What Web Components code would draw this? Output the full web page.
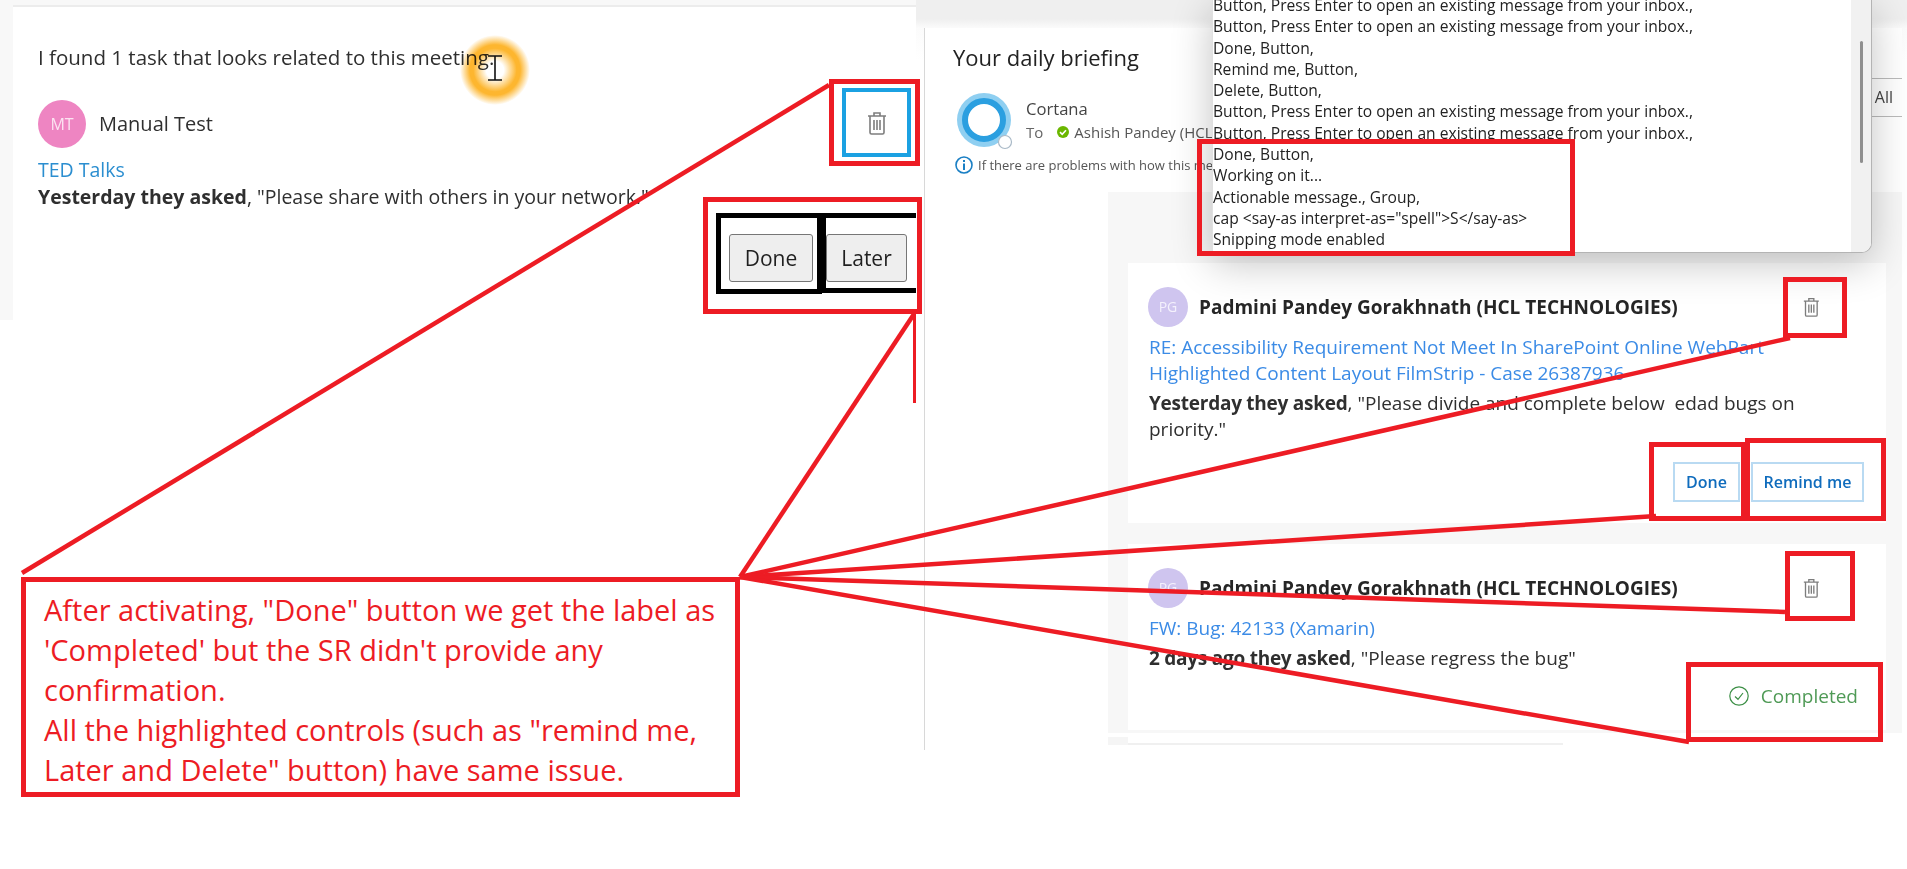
<!DOCTYPE html>
<html lang="en">
<head>
<meta charset="utf-8">
<title>Daily briefing</title>
<style>
    html, body { margin: 0; padding: 0; background: #fff; }
    body { font-family: "Open Sans", "Liberation Sans", sans-serif; color: #2b2b2b; width: 1907px; height: 869px; overflow: hidden; }
    task-card b { letter-spacing: -.25px; }
</style>
</head>
<body>
<shot-canvas>
    <meeting-panel></meeting-panel>
    <briefing-panel>
        <task-card slot="cards" style="height:260px" initials="PG" name="Padmini Pandey Gorakhnath (HCL TECHNOLOGIES)">
            <span slot="link">RE: Accessibility Requirement Not Meet In SharePoint Online WebPart<br>Highlighted Content Layout FilmStrip - Case 26387936</span>
            <span slot="text"><b>Yesterday they asked</b>, "Please divide and complete below&nbsp; edad bugs on<br>priority."</span>
            <action-button slot="actions" style="width:67px">Done</action-button>
            <action-button slot="actions" style="width:113px">Remind me</action-button>
        </task-card>
        <task-card slot="cards" style="height:186px" initials="PG" name="Padmini Pandey Gorakhnath (HCL TECHNOLOGIES)">
            <span slot="link">FW: Bug: 42133 (Xamarin)</span>
            <span slot="text"><b>2 days ago they asked</b>, "Please regress the bug"</span>
            <completed-label slot="actions">Completed</completed-label>
        </task-card>
    </briefing-panel>
    <sr-log>
        <div>Button, Press Enter to open an existing message from your inbox.,</div>
        <div>Button, Press Enter to open an existing message from your inbox.,</div>
        <div>Done, Button,</div>
        <div>Remind me, Button,</div>
        <div>Delete, Button,</div>
        <div>Button, Press Enter to open an existing message from your inbox.,</div>
        <div>Button, Press Enter to open an existing message from your inbox.,</div>
        <div>Done, Button,</div>
        <div>Working on it...</div>
        <div>Actionable message., Group,</div>
        <div>cap &lt;say-as interpret-as="spell"&gt;S&lt;/say-as&gt;</div>
        <div>Snipping mode enabled</div>
    </sr-log>
    <cursor-glow></cursor-glow>
    <markup-layer></markup-layer>
    <mark-box x="829" y="79" w="91" h="87"></mark-box>
    <mark-box x="703" y="197" w="219" h="117"></mark-box>
    <mark-box x="1197" y="139" w="378" h="117"></mark-box>
    <mark-box x="1783" y="277" w="64" h="61"></mark-box>
    <mark-box x="1649" y="442" w="97" h="79"></mark-box>
    <mark-box x="1745" y="438" w="141" h="83"></mark-box>
    <mark-box x="1785" y="551" w="70" h="70"></mark-box>
    <mark-box x="1686" y="662" w="197" h="80"></mark-box>
    <issue-note>
        After activating, "Done" button we get the label as<br>
        'Completed' but the SR didn't provide any<br>
        confirmation.<br>
        All the highlighted controls (such as "remind me,<br>
        Later and Delete" button) have same issue.
    </issue-note>
</shot-canvas>

<script>
class ShotCanvas extends HTMLElement {
    constructor() {
        super();
        this.attachShadow({mode: "open"}).innerHTML = `
            <style>
                :host { display: flex; position: relative; width: 1907px; height: 869px; overflow: hidden; }
            </style>
            <slot></slot>`;
    }
}

class TrashButton extends HTMLElement {
    constructor() {
        super();
        const h = this.getAttribute("size") || 24;
        this.attachShadow({mode: "open"}).innerHTML = `
            <style>
                :host { display: inline-flex; align-items: center; justify-content: center; }
            </style>
            <svg height="${h}" width="${h * 20 / 24}" viewBox="0 0 20 24" fill="none" stroke="#7d7d7d" stroke-width="1.6">
                <path d="M1 5h18M7 5V2h6v3M3 5v16.5c0 .8.6 1.5 1.5 1.5h11c.9 0 1.5-.7 1.5-1.5V5M7 9v10M10 9v10M13 9v10"/>
            </svg>`;
    }
}

class MeetingPanel extends HTMLElement {
    constructor() {
        super();
        this.attachShadow({mode: "open"}).innerHTML = `
            <style>
                * { box-sizing: border-box; }
                :host { display: block; box-sizing: border-box; width: 916px; height: 320px; flex: none; background: #f8f8f8; padding: 5px 0 0 13px; font-size: 20px; line-height: 28px; color: #2f2f2f; }
                .inner { height: 100%; background: #fff; border-top: 2px solid #ececec; display: flex; flex-direction: column; padding: 36px 0 0 25px; }
                .title { font-size: 20.5px; }
                .head { display: flex; align-items: center; justify-content: space-between; height: 69px; margin-top: 17px; padding-right: 5px; }
                .who { display: flex; align-items: center; gap: 13px; margin-top: 3px; }
                .avatar { width: 48px; height: 48px; border-radius: 50%; background: #ee85c2; color: #fbe3f1; font-size: 16px; display: flex; align-items: center; justify-content: center; }
                .focus { width: 69px; height: 69px; border: 4px solid #1ba1e2; display: flex; align-items: center; justify-content: center; }
                .link { color: #2b8ed0; margin-top: -1px; line-height: 27px; font-size: 19.5px; }
                .ask { font-size: 19.5px; white-space: nowrap; }
                .ask b { font-weight: 700; }
                .acts { display: flex; justify-content: flex-end; margin-top: 2px; }
                .box { border: 5px solid #000; height: 81px; display: flex; }
                .box.done { width: 106px; padding: 16px 4px 7px 8px; }
                .box.later { width: 94px; height: 80px; border-width: 5px 0 5px 4px; padding: 16px 9px 7px 0; }
                button { flex: 1; font: inherit; font-size: 21px; color: #1f1f1f; background: #eeeeee; border: 1px solid #767676; border-radius: 3px; padding: 0; height: 48px; }
            </style>
            <div class="inner">
                <div class="title">I found 1 task that looks related to this meeting.</div>
                <div class="head">
                    <div class="who"><span class="avatar">MT</span><span>Manual Test</span></div>
                    <div class="focus"><trash-button></trash-button></div>
                </div>
                <div class="link">TED Talks</div>
                <div class="ask"><b>Yesterday they asked</b>, "Please share with others in your network."</div>
                <div class="acts">
                    <div class="box done"><button>Done</button></div>
                    <div class="box later"><button>Later</button></div>
                </div>
            </div>`;
    }
}

class BriefingPanel extends HTMLElement {
    constructor() {
        super();
        this.attachShadow({mode: "open"}).innerHTML = `
            <style>
                * { box-sizing: border-box; }
                :host { display: block; box-sizing: border-box; flex: 1; height: 750px; padding: 28px 5px 0 8px; background: linear-gradient(#efefef 0, #efefef 19px, #fbfbfb 28px, #fff 60px) no-repeat; background-size: 100% 60px; }
                .inner { height: 100%; background: #fff; border-left: 1px solid #d8d8d8; padding: 14px 0 0 28px; }
                h1 { margin: 0; font-size: 22px; line-height: 30px; font-weight: 400; color: #222; }
                .sender { display: flex; justify-content: space-between; margin-top: 21px; height: 54px; }
                .left { display: flex; gap: 15px; margin-left: 4px; }
                .logo { width: 54px; height: 54px; flex: none; }
                .logo svg { overflow: visible; }
                .names { padding-top: 5px; font-size: 15px; line-height: 22px; white-space: nowrap; }
                .cortana { font-size: 16.6px; color: #444; }
                .to { display: flex; align-items: center; gap: 5px; color: #555; padding-top: 1px; }
                .to .lbl { margin-right: 9px; color: #666; }
                .tab { width: 60px; height: 39px; margin-top: -15px; border-top: 1px solid #bbb; border-bottom: 1px solid #bbb; font-size: 16px; line-height: 37px; color: #444; text-align: right; padding-right: 9px; }
                .info { display: flex; align-items: center; gap: 5px; margin: 8px 0 0 2px; height: 20px; font-size: 13px; color: #555; white-space: nowrap; }
                .cards { margin: 17px 0 0 155px; background: #f7f7f7; padding: 71px 16px 3px 20px; display: flex; flex-direction: column; gap: 21px; }
                .strip { display: flex; margin: 4px 0 0 155px; height: 8px; }
                .strip i { width: 20px; background: #f5f5f5; }
                .strip u { width: 435px; background: #fff; border-bottom: 2px solid #f0f0f0; }
            </style>
            <div class="inner">
                <h1>Your daily briefing</h1>
                <div class="sender">
                    <div class="left">
                        <div class="logo">
                            <svg width="54" height="54" viewBox="0 0 54 54">
                                <circle cx="27" cy="27" r="27" fill="#8fcff1"/>
                                <circle cx="27" cy="27" r="19" fill="#fff" stroke="#2b9fe0" stroke-width="6"/>
                                <circle cx="48" cy="49" r="6.5" fill="#fff" stroke="#a9b9c7" stroke-width="1.2"/>
                            </svg>
                        </div>
                        <div class="names">
                            <div class="cortana">Cortana</div>
                            <div class="to"><span class="lbl">To</span>
                                <svg width="12" height="12" viewBox="0 0 12 12"><circle cx="6" cy="6" r="6" fill="#6bb700"/><path d="M3 6.2l2.2 2.1L9 4.2" fill="none" stroke="#fff" stroke-width="1.6"/></svg>
                                <span>Ashish Pandey (HCL T</span>
                            </div>
                        </div>
                    </div>
                    <div class="tab">All</div>
                </div>
                <div class="info">
                    <svg width="18" height="18" viewBox="0 0 18 18"><circle cx="9" cy="9" r="8" fill="#fff" stroke="#1a7fc4" stroke-width="1.6"/><path d="M9 7.5V14M9 4v2" stroke="#1a7fc4" stroke-width="2" fill="none"/></svg>
                    <span>If there are problems with how this mess</span>
                </div>
                <div class="cards"><slot name="cards"></slot></div>
                <div class="strip"><i></i><u></u></div>
            </div>`;
    }
}

class TaskCard extends HTMLElement {
    constructor() {
        super();
        const shadow = this.attachShadow({mode: "open"});
        shadow.innerHTML = `
            <style>
                * { box-sizing: border-box; }
                :host { display: block; box-sizing: border-box; background: #fff; padding: 24px 0 0 20px; font-size: 19px; line-height: 26px; color: #2f2f2f; }
                .head { display: flex; justify-content: space-between; align-items: center; height: 40px; padding-right: 66px; }
                .who { display: flex; align-items: center; gap: 11px; }
                .avatar { width: 40px; height: 40px; border-radius: 50%; background: #cfc5ef; color: #f4f1fc; font-size: 14px; display: flex; align-items: center; justify-content: center; }
                .name { font-weight: 700; color: #262626; }
                .link { color: #3b8be6; margin: 7px 0 0 1px; display: block; white-space: nowrap; }
                .text { margin: 4px 0 0 1px; display: block; white-space: nowrap; }
                .acts { display: flex; justify-content: flex-end; gap: 11px; padding-right: 22px; margin-top: 20px; }
            </style>
            <div class="head">
                <div class="who"><span class="avatar"></span><span class="name"></span></div>
                <trash-button size="20"></trash-button>
            </div>
            <div class="link"><slot name="link"></slot></div>
            <div class="text"><slot name="text"></slot></div>
            <div class="acts"><slot name="actions"></slot></div>`;
        shadow.querySelector(".avatar").textContent = this.getAttribute("initials");
        shadow.querySelector(".name").textContent = this.getAttribute("name");
    }
}

class ActionButton extends HTMLElement {
    constructor() {
        super();
        this.attachShadow({mode: "open"}).innerHTML = `
            <style>
                :host { display: inline-flex; align-items: center; justify-content: center; box-sizing: border-box; height: 40px; background: #fff; border: 2px solid #b9daf2; color: #0f6cbd; font-size: 16px; font-weight: 600; }
            </style>
            <slot></slot>`;
    }
}

class CompletedLabel extends HTMLElement {
    constructor() {
        super();
        this.attachShadow({mode: "open"}).innerHTML = `
            <style>
                :host { display: inline-flex; align-items: center; gap: 12px; height: 26px; margin: -8px 6px 0 0; color: #4f9a56; font-size: 19px; }
            </style>
            <svg width="20" height="20" viewBox="0 0 20 20" fill="none" stroke="#3c8f46" stroke-width="1.2"><circle cx="10" cy="10" r="9.2"/><path d="M6 10.5l3 2.8 5-6.3"/></svg>
            <slot></slot>`;
    }
}

class SrLog extends HTMLElement {
    constructor() {
        super();
        this.attachShadow({mode: "open"}).innerHTML = `
            <style>
                * { box-sizing: border-box; }
                :host { position: absolute; left: 1212px; top: 0; width: 660px; height: 253px; box-sizing: border-box; display: flex; background: #fff; border: 1px solid #b4b4b4; border-top: 0; border-left-color: #e0e0e0; border-radius: 0 0 10px 0; overflow: hidden; box-shadow: 0 10px 40px rgba(0,0,0,.24); }
                .list { flex: 1; margin-top: -5px; padding-left: 0; font-size: 15.6px; line-height: 21.3px; color: #222; white-space: nowrap; }
                .track { width: 20px; background: #f1f1f1; display: flex; justify-content: center; padding-top: 41px; }
                .thumb { width: 3px; height: 122px; background: #8f8f8f; border-radius: 2px; }
            </style>
            <div class="list"><slot></slot></div>
            <div class="track"><div class="thumb"></div></div>`;
    }
}

class CursorGlow extends HTMLElement {
    constructor() {
        super();
        this.attachShadow({mode: "open"}).innerHTML = `
            <style>
                :host { position: absolute; left: 460px; top: 35px; width: 70px; height: 70px; box-sizing: border-box; border-radius: 50%; mix-blend-mode: multiply; background: radial-gradient(circle closest-side, #fff 0, #fff 25%, #fdb62f 62%, #fdb62f 72%, #fff 100%); display: flex; justify-content: center; padding-top: 20px; }
            </style>
            <svg width="16" height="26" viewBox="0 0 16 26" fill="none" stroke="#111" stroke-width="1.6"><path d="M1 1h14M8 1v24M1 25h14"/></svg>`;
    }
}

class MarkupLayer extends HTMLElement {
    constructor() {
        super();
        const lines = [
            [22, 573, 829, 85], [740, 577, 914, 314], [740, 577, 1790, 338],
            [740, 577, 1656, 516], [740, 577, 1785, 612], [740, 577, 1689, 742]
        ];
        this.attachShadow({mode: "open"}).innerHTML = `
            <style>
                :host { position: absolute; inset: 0; pointer-events: none; }
                svg { display: block; }
            </style>
            <svg width="1907" height="869" stroke="#ed1c24" stroke-width="4.5" fill="none">
                ${lines.map(l => `<line x1="${l[0]}" y1="${l[1]}" x2="${l[2]}" y2="${l[3]}"/>`).join("")}
                <line x1="914.5" y1="314" x2="914.5" y2="403" stroke-width="3"/>
            </svg>`;
    }
}

class MarkBox extends HTMLElement {
    constructor() {
        super();
        const a = n => this.getAttribute(n);
        this.attachShadow({mode: "open"}).innerHTML = `
            <style>
                :host { position: absolute; left: ${a("x")}px; top: ${a("y")}px; width: ${a("w")}px; height: ${a("h")}px; box-sizing: border-box; border: 5px solid #ed1c24; }
            </style>`;
    }
}

class IssueNote extends HTMLElement {
    constructor() {
        super();
        this.attachShadow({mode: "open"}).innerHTML = `
            <style>
                :host { position: absolute; left: 21px; top: 577px; width: 719px; height: 220px; box-sizing: border-box; border: 5px solid #ed1c24; background: #fff; padding: 8px 0 0 18px; color: #ed1c24; font-size: 29px; line-height: 40px; white-space: nowrap; }
            </style>
            <slot></slot>`;
    }
}

customElements.define("shot-canvas", ShotCanvas);
customElements.define("trash-button", TrashButton);
customElements.define("meeting-panel", MeetingPanel);
customElements.define("briefing-panel", BriefingPanel);
customElements.define("task-card", TaskCard);
customElements.define("action-button", ActionButton);
customElements.define("completed-label", CompletedLabel);
customElements.define("sr-log", SrLog);
customElements.define("cursor-glow", CursorGlow);
customElements.define("markup-layer", MarkupLayer);
customElements.define("mark-box", MarkBox);
customElements.define("issue-note", IssueNote);
</script>
</body>
</html>
